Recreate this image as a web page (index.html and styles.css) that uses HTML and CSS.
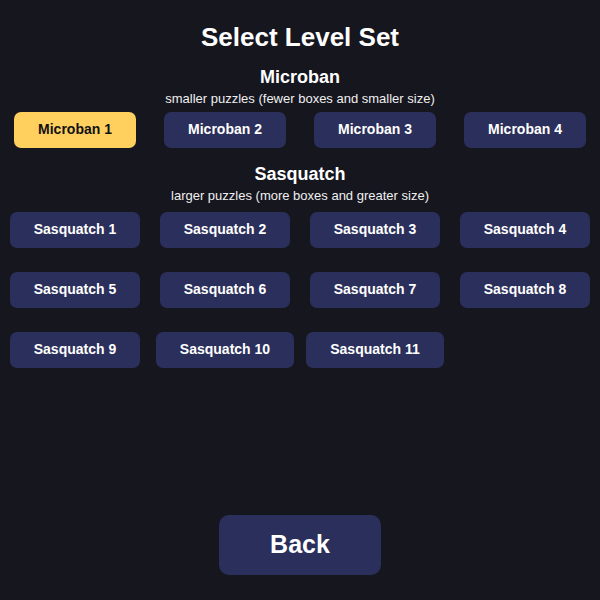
FILE: index.html
```html
<!DOCTYPE html>
<html lang="en">
<head>
<meta charset="utf-8">
<title>Select Level Set</title>
<link rel="stylesheet" href="styles.css">
</head>
<body>
<main class="screen">
  <h1 class="title">Select Level Set</h1>

  <section class="set set-micro">
    <h2 class="set-name">Microban</h2>
    <p class="set-desc">smaller puzzles (fewer boxes and smaller size)</p>
    <div class="grid grid-micro">
      <button class="lvl active">Microban 1</button>
      <button class="lvl">Microban 2</button>
      <button class="lvl">Microban 3</button>
      <button class="lvl">Microban 4</button>
    </div>
  </section>

  <section class="set set-sas">
    <h2 class="set-name">Sasquatch</h2>
    <p class="set-desc">larger puzzles (more boxes and greater size)</p>
    <div class="grid grid-sas">
      <button class="lvl">Sasquatch 1</button>
      <button class="lvl">Sasquatch 2</button>
      <button class="lvl">Sasquatch 3</button>
      <button class="lvl">Sasquatch 4</button>
      <button class="lvl">Sasquatch 5</button>
      <button class="lvl">Sasquatch 6</button>
      <button class="lvl">Sasquatch 7</button>
      <button class="lvl">Sasquatch 8</button>
      <button class="lvl">Sasquatch 9</button>
      <button class="lvl">Sasquatch 10</button>
      <button class="lvl">Sasquatch 11</button>
    </div>
  </section>

  <button class="back">Back</button>
</main>
</body>
</html>
```

FILE: styles.css
```css
html, body {
  margin: 0;
  padding: 0;
  background: #16161f;
}

body {
  font-family: "Liberation Sans", Arial, sans-serif;
  color: #ffffff;
}

.screen {
  display: flex;
  flex-direction: column;
  align-items: center;
  min-height: 100vh;
  box-sizing: border-box;
  padding-top: 22px;
  padding-bottom: 25px;
}

.title {
  margin: 0;
  font-size: 26px;
  line-height: 30px;
  font-weight: bold;
}

.set {
  display: flex;
  flex-direction: column;
  align-items: center;
  width: 100%;
}

.set-micro {
  margin-top: 15px;
}

.set-sas {
  margin-top: 16px;
}

.set-name {
  margin: 0;
  font-size: 18px;
  line-height: 21px;
  font-weight: bold;
}

.set-desc {
  margin: 3px 0 0;
  font-size: 13px;
  line-height: 15px;
  color: #f0f0f0;
}

.grid {
  display: grid;
  grid-template-columns: repeat(4, 150px);
  justify-items: center;
  row-gap: 24px;
}

.grid-micro {
  margin-top: 6px;
}

.grid-sas {
  margin-top: 9px;
}

.lvl {
  font-family: "Liberation Sans", Arial, sans-serif;
  font-size: 14px;
  font-weight: bold;
  line-height: 16px;
  color: #ffffff;
  background: #2b2f5b;
  border: none;
  border-radius: 7px;
  padding: 9px 24px 11px;
  cursor: pointer;
}

.lvl.active {
  background: #ffd05e;
  color: #111111;
}

.back {
  margin-top: auto;
  width: 162px;
  height: 60px;
  padding: 0 0 2px;
  font-family: "Liberation Sans", Arial, sans-serif;
  font-size: 25px;
  font-weight: bold;
  color: #ffffff;
  background: #2b2f5b;
  border: none;
  border-radius: 10px;
  cursor: pointer;
}
```
